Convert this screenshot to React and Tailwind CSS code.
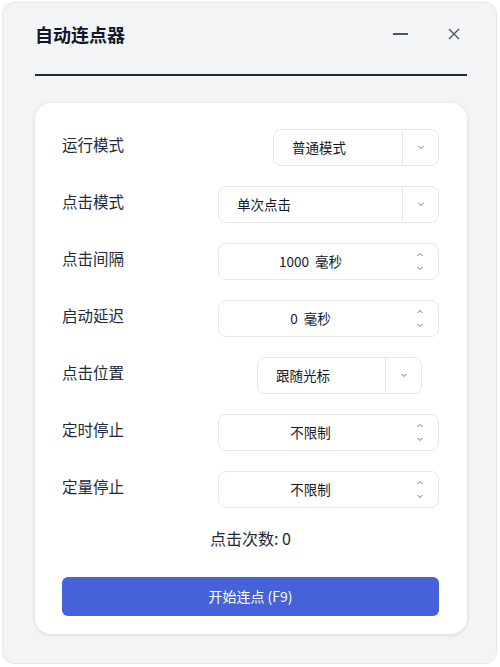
import React from 'react';

const font = { fontFamily: '"Noto Sans CJK SC", "Noto Sans", sans-serif' };

const Chevron = ({ up = false }) => (
  <svg width="8" height="5" viewBox="0 0 8 5" className="text-gray-500">
    <path
      d={up ? 'M1.5 4 L4 1.5 L6.5 4' : 'M1.5 1 L4 3.5 L6.5 1'}
      fill="none"
      stroke="currentColor"
      strokeWidth="1"
    />
  </svg>
);

const SelectBox = ({ value, className }) => (
  <div className={`flex h-[37px] rounded-lg border border-gray-200 bg-white ${className}`}>
    <div className="flex flex-1 items-center pl-[18px] text-[13.5px] text-gray-900">{value}</div>
    <div className="flex w-[36px] items-center justify-center border-l border-gray-200">
      <Chevron />
    </div>
  </div>
);

const NumberBox = ({ value }) => (
  <div className="flex h-[37px] w-[221px] rounded-lg border border-gray-200 bg-white">
    <div className="flex flex-1 items-center justify-center whitespace-pre text-[13.5px] text-gray-900">{value}</div>
    <div className="flex w-[36px] flex-col items-center justify-between py-[8px]">
      <Chevron up />
      <Chevron />
    </div>
  </div>
);

const Row = ({ label, children }) => (
  <div className="flex items-start">
    <span className="pt-[4px] text-[15.5px] leading-[22px] text-gray-800">{label}</span>
    <div className="ml-auto flex w-[221px]">{children}</div>
  </div>
);

export default function App() {
  return (
    <div className="min-h-[667px] w-[500px] bg-white p-[2px] pr-[3px]" style={font}>
      <div className="flex h-[662px] flex-col rounded-xl border border-gray-200 bg-[#f3f4f6] pl-[32px] pr-[29px]">
        {/* Title bar */}
        <div className="mb-[9px] flex h-[62px] items-center">
          <h1 className="text-[18px] font-bold text-gray-900">自动连点器</h1>
          <div className="ml-auto flex items-center gap-[40px] pr-[7px]">
            <span className="block h-[1.5px] w-[15px] bg-gray-600" />
            <svg width="12" height="12" viewBox="0 0 12 12" className="text-gray-600">
              <path d="M1 1 L11 11 M11 1 L1 11" stroke="currentColor" strokeWidth="1.4" />
            </svg>
          </div>
        </div>
        <div className="h-[2px] bg-gray-800" />

        {/* Card */}
        <div className="mt-[27px] rounded-2xl bg-white pl-[27px] pr-[28px] pt-[26px] pb-[18px] shadow-[0_1px_4px_rgba(0,0,0,0.12)]">
          <div className="flex flex-col gap-[20px]">
            <Row label="运行模式">
              <SelectBox value="普通模式" className="ml-auto w-[166px]" />
            </Row>
            <Row label="点击模式">
              <SelectBox value="单次点击" className="w-[221px]" />
            </Row>
            <Row label="点击间隔">
              <NumberBox value="1000  毫秒" />
            </Row>
            <Row label="启动延迟">
              <NumberBox value="0  毫秒" />
            </Row>
            <Row label="点击位置">
              <SelectBox value="跟随光标" className="ml-[39px] w-[165px]" />
            </Row>
            <Row label="定时停止">
              <NumberBox value="不限制" />
            </Row>
            <Row label="定量停止">
              <NumberBox value="不限制" />
            </Row>
          </div>

          <p className="mt-[18px] text-center text-[16px] leading-[24px] text-gray-800">点击次数: 0</p>

          <button className="mt-[27px] h-[39px] w-full rounded-md bg-[#4562d9] text-[14px] text-white">
            开始连点 (F9)
          </button>
        </div>
      </div>
    </div>
  );
}
